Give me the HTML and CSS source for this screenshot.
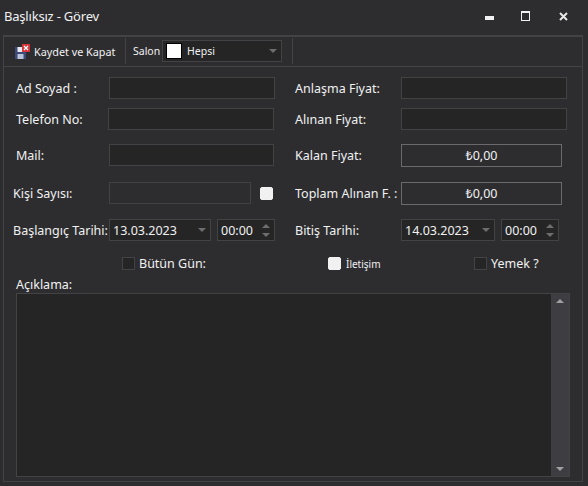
FILE: index.html
```html
<!DOCTYPE html>
<html>
<head>
    <title>Başlıksız - Görev</title>
    <link rel="stylesheet" href="styles.css">
</head>
<body>
    <div class="window">
        <div class="titlebar">
            <span class="title">Başlıksız - Görev</span>
            <div class="winbtns">
                <svg class="min" width="9" height="4"><rect width="9" height="4" y="0" fill="#f1f1f1"/></svg>
                <svg class="max" width="9" height="10"><rect x="0.5" y="1" width="8" height="8.5" fill="none" stroke="#f1f1f1"/><rect width="9" height="2" fill="#f1f1f1"/></svg>
                <svg class="close" width="9" height="9"><path d="M1 1L8 8M8 1L1 8" stroke="#e8e8e8" stroke-width="2" fill="none"/></svg>
            </div>
        </div>
        <div class="panel">
            <div class="toolbar">
                <div class="tool save">
                    <svg width="15" height="15" viewBox="0 0 15 15">
                        <rect x="0" y="3" width="11" height="12" fill="#3b4a78"/>
                        <rect x="2.5" y="3" width="6" height="5" fill="#e8e8ee"/>
                        <rect x="2.5" y="10" width="6" height="5" fill="#b9c3d8"/>
                        <rect x="7" y="0" width="8" height="8" fill="#d8343a"/>
                        <path d="M9 2L13 6M13 2L9 6" stroke="#fff" stroke-width="1.3"/>
                    </svg>
                    <span>Kaydet ve Kapat</span>
                </div>
                <div class="tool salon">
                    <span class="salon-text">Salon</span>
                    <div class="combo">
                        <span class="swatch"></span>
                        <span class="combo-text">Hepsi</span>
                        <span class="arrow"></span>
                    </div>
                </div>
                <div class="tool-end"></div>
            </div>
            <div class="form">
                <div class="row row1">
                    <label class="lbl">Ad Soyad :</label>
                    <div class="input w166"></div>
                    <label class="lbl right">Anlaşma Fiyat:</label>
                    <div class="input w166"></div>
                </div>
                <div class="row row2">
                    <label class="lbl tel">Telefon No:</label>
                    <div class="input w166"></div>
                    <label class="lbl right">Alınan Fiyat:</label>
                    <div class="input w166"></div>
                </div>
                <div class="row row3">
                    <label class="lbl">Mail:</label>
                    <div class="input w165"></div>
                    <label class="lbl right">Kalan Fiyat:</label>
                    <div class="money">₺0,00</div>
                </div>
                <div class="row row4">
                    <label class="lbl wide">Kişi Sayısı:</label>
                    <div class="input disabled"></div>
                    <span class="check on"></span>
                    <label class="lbl right">Toplam Alınan F. :</label>
                    <div class="money">₺0,00</div>
                </div>
                <div class="row row5">
                    <label class="lbl wide">Başlangıç Tarihi:</label>
                    <div class="date d102"><span>13.03.2023</span><span class="arrow"></span></div>
                    <div class="time"><span>00:00</span><span class="spin"><i class="up"></i><i class="down"></i></span></div>
                    <label class="lbl right">Bitiş Tarihi:</label>
                    <div class="date d94"><span>14.03.2023</span><span class="arrow"></span></div>
                    <div class="time"><span>00:00</span><span class="spin"><i class="up"></i><i class="down"></i></span></div>
                </div>
                <div class="checks">
                    <div class="opt opt1"><span class="check"></span><span>Bütün Gün:</span></div>
                    <div class="opt opt2"><span class="check on"></span><span class="small">İletişim</span></div>
                    <div class="opt opt3"><span class="check"></span><span>Yemek ?</span></div>
                </div>
                <div class="desc-label">Açıklama:</div>
                <div class="memo">
                    <div class="scroll"><i class="up"></i><i class="down"></i></div>
                </div>
            </div>
        </div>
    </div>
</body>
</html>
```

FILE: styles.css
```css
* {
    box-sizing: border-box;
}

body {
    margin: 0;
    background-color: #2d2d30;
    color: #f1f1f1;
    font-family: "Noto Sans", sans-serif;
    font-size: 12.5px;
}

.window {
    width: 588px;
    height: 486px;
    overflow: hidden;
}

.titlebar {
    height: 35px;
    display: flex;
    align-items: center;
    justify-content: space-between;
    padding-left: 4px;
    padding-bottom: 3px;
}

.title {
    font-size: 13px;
    letter-spacing: -0.2px;
}

.winbtns {
    display: flex;
    align-items: center;
    padding-right: 20px;
}

.min {
    margin-top: 4px;
    margin-right: 27px;
}

.max {
    margin-right: 29px;
}

.panel {
    margin-left: 3px;
    width: 580px;
    height: 447px;
    border: 1px solid #434346;
    border-top-width: 2px;
}

.toolbar {
    height: 30px;
    display: flex;
    border-bottom: 1px solid #434346;
}

.tool {
    display: flex;
    align-items: center;
    border-right: 1px solid #434346;
    margin: 1px 0 2px;
}

.save {
    width: 122px;
    padding-left: 11px;
    gap: 4px;
    font-size: 10.8px;
}

.salon {
    width: 167px;
    padding-left: 7px;
    font-size: 10.5px;
}

.salon-text {
    width: 29px;
}

.combo {
    width: 120px;
    height: 22px;
    background-color: #252526;
    border: 1px solid #434346;
    display: flex;
    align-items: center;
    padding-left: 3px;
}

.swatch {
    width: 16px;
    height: 16px;
    background-color: #fff;
    border: 1px solid #000;
    margin-right: 5px;
}

.arrow {
    width: 0;
    height: 0;
    border-left: 4px solid transparent;
    border-right: 4px solid transparent;
    border-top: 4px solid #6d6d70;
}

.combo .arrow {
    margin-left: auto;
    margin-right: 4px;
}

.form {
    padding-left: 6px;
}

.row {
    display: flex;
    align-items: center;
    height: 22px;
}

.row1 {
    margin-top: 10px;
}

.row2 {
    margin-top: 9px;
}

.row3 {
    margin-top: 14px;
}

.row4 {
    margin-top: 16px;
}

.row5 {
    margin-top: 15px;
}

.lbl {
    width: 99px;
    padding-left: 6px;
    white-space: nowrap;
}

.tel {
    width: 98px;
}

.wide {
    padding-left: 3px;
}

.right {
    width: 106px;
    padding-left: 0;
    margin-left: 20px;
}

.row2 .right {
    margin-left: 21px;
}

.row3 .right {
    margin-left: 21px;
}

.row4 .right {
    margin-left: 22px;
}

.input {
    height: 22px;
    background-color: #252526;
    border: 1px solid #434346;
}

.w166 {
    width: 166px;
}

.w165 {
    width: 165px;
}

.disabled {
    width: 142px;
    background-color: #2d2d30;
}

.money {
    width: 161px;
    height: 23px;
    border: 1px solid #6a6a6d;
    text-align: center;
    line-height: 21px;
}

.check {
    width: 13px;
    height: 13px;
    display: inline-block;
    background-color: #252526;
    border: 1px solid #434346;
}

.check.on {
    background-color: #f1f1f1;
    border-color: #f1f1f1;
    border-radius: 2px;
}

.row4 .check {
    margin-left: 9px;
}

.date {
    height: 22px;
    background-color: #252526;
    border: 1px solid #434346;
    display: flex;
    align-items: center;
    padding-left: 3px;
}

.date .arrow {
    margin-left: auto;
    margin-right: 4px;
}

.d102 {
    width: 102px;
}

.d94 {
    width: 94px;
}

.time {
    width: 58px;
    height: 22px;
    margin-left: 6px;
    background-color: #252526;
    border: 1px solid #434346;
    display: flex;
    align-items: center;
    justify-content: space-between;
    padding: 0 4px 0 3px;
}

.spin {
    display: flex;
    flex-direction: column;
    gap: 5px;
}

.up {
    display: block;
    width: 0;
    height: 0;
    border-left: 4px solid transparent;
    border-right: 4px solid transparent;
    border-bottom: 4px solid #6d6d70;
}

.down {
    display: block;
    width: 0;
    height: 0;
    border-left: 4px solid transparent;
    border-right: 4px solid transparent;
    border-top: 4px solid #6d6d70;
}

.checks {
    display: flex;
    height: 13px;
    margin-top: 16px;
}

.opt {
    display: flex;
    align-items: center;
    gap: 4px;
}

.opt1 {
    margin-left: 112px;
    width: 206px;
}

.opt2 {
    width: 146px;
    gap: 5px;
}

.small {
    font-size: 10px;
}

.desc-label {
    margin-top: 6px;
    margin-left: 6px;
    height: 17px;
    line-height: 17px;
}

.memo {
    margin-left: 6px;
    width: 554px;
    height: 184px;
    background-color: #252526;
    border: 1px solid #434346;
    display: flex;
    justify-content: flex-end;
}

.scroll {
    width: 18px;
    background-color: #3e3e42;
    display: flex;
    flex-direction: column;
    align-items: center;
    justify-content: space-between;
    padding: 5px 0;
}

.scroll .up {
    border-bottom-color: #a0a0a0;
}

.scroll .down {
    border-top-color: #a0a0a0;
}
```
